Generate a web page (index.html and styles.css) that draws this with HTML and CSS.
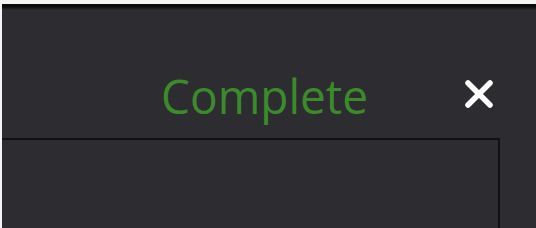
FILE: index.html
```html
<!DOCTYPE html>
<html lang="en">
<head>
  <meta charset="UTF-8">
  <title>Complete</title>
  <link rel="stylesheet" href="styles.css">
</head>
<body>
  <div class="topbar"></div>
  <div class="header">
    <h1 class="status">Complete</h1>
    <button class="close" aria-label="Close">
      <svg width="32" height="32" viewBox="0 0 32 32">
        <path d="M5 5 L27 27 M27 5 L5 27" stroke="#fff" stroke-width="5.5" stroke-linecap="round" fill="none"/>
      </svg>
    </button>
  </div>
  <div class="panel"></div>
</body>
</html>
```

FILE: styles.css
```css
body {
  margin: 0;
  height: 228px;
  overflow: hidden;
  background-color: #2d2c31;
  border-left: 2px solid #f4f4f4;
  font-family: "Open Sans", "Noto Sans", sans-serif;
}

.topbar {
  height: 6px;
  border-top: 4px solid #f4f4f4;
  background: linear-gradient(#0b0b0c 0%, #0b0b0c 45%, #2d2c31 100%);
}

.header {
  display: flex;
  align-items: flex-start;
  justify-content: space-between;
  height: 128px;
  padding-right: 41px;
}

.status {
  margin: 62px 0 0 159px;
  font-size: 46px;
  font-weight: 500;
  line-height: 1;
  color: #3b8b2b;
  transform: scaleY(1.04);
}

.close {
  margin: 68px 0 0 0;
  padding: 0;
  border: 0;
  background: none;
  width: 32px;
  height: 32px;
}

.close svg {
  display: block;
}

.panel {
  width: 496px;
  height: 88px;
  border-top: 2px solid #111113;
  border-right: 2px solid #111113;
}
```
